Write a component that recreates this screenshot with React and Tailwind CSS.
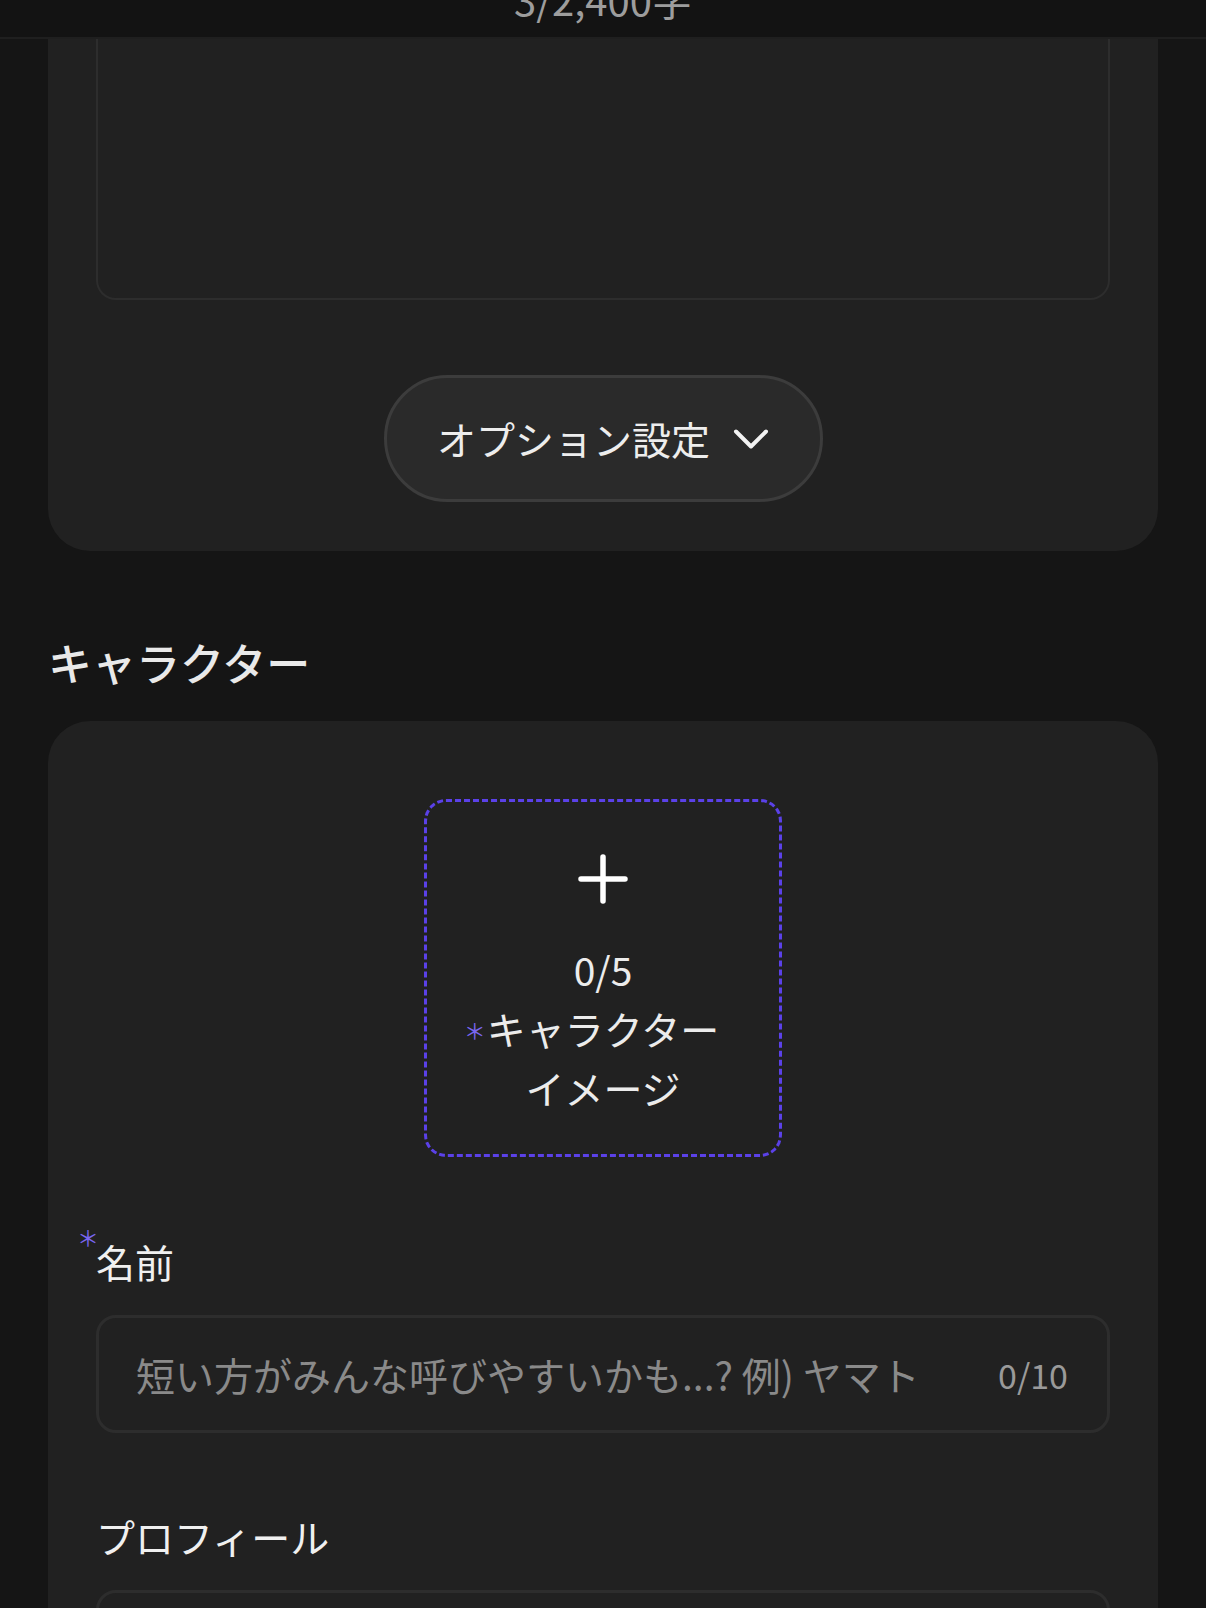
import React from 'react';

const FONT = "font-['Noto_Sans_CJK_JP','Noto_Sans',sans-serif]";

function PlusIcon() {
  return (
    <svg width="50" height="50" viewBox="0 0 50 50" fill="none">
      <path d="M25 3v44M3 25h44" stroke="#ffffff" strokeWidth="5.5" strokeLinecap="round" />
    </svg>
  );
}

function ChevronIcon() {
  return (
    <svg width="36" height="36" viewBox="0 0 36 36" fill="none">
      <path d="M3 10.5l15 15 15-15" stroke="#f2f2f2" strokeWidth="4" strokeLinecap="round" strokeLinejoin="round" />
    </svg>
  );
}

function Field({ label, required, placeholder, count }) {
  return (
    <div>
      <div className="relative inline-block text-[39px] leading-[58px] text-[#f0f0f0]">
        {required && (
          <span className="absolute -left-[19px] -top-[7px] text-[22px] leading-none text-[#7a66f0]">＊</span>
        )}
        {label}
      </div>
      <div className="mt-[25px] h-[118px] rounded-[20px] border-[3px] border-[#2d2d2d] bg-[#212121] flex items-center justify-between pl-[37px] pr-[39px]">
        <span className="text-[39px] text-[#8a8a8a] whitespace-nowrap">{placeholder}</span>
        {count && <span className="text-[34px] text-[#9a9a9a]">{count}</span>}
      </div>
    </div>
  );
}

export default function App() {
  return (
    <div className={`${FONT} w-full h-[1608px] overflow-hidden bg-[#151515]`}>
      {/* sticky counter bar */}
      <div className="h-[39px] overflow-hidden bg-[#131313] border-b-2 border-[#1f1f1f]">
        <div className="-mt-[21px] text-center text-[40px] leading-[40px] text-[#9d9d9d]">3/2,400字</div>
      </div>

      {/* story card (scrolled) */}
      <div className="mx-[48px] rounded-b-[42px] bg-[#212121] px-[48px] pb-[49px]">
        <div className="h-[261px] rounded-b-[20px] border-2 border-t-0 border-[#2d2d2d] bg-[#212121]" />
        <div className="mt-[75px] flex justify-center">
          <button className="w-[439px] h-[127px] rounded-full border-[3px] border-[#3c3c3c] bg-[#2a2a2a] flex items-center justify-center gap-[23px]">
            <span className="text-[39px] text-[#ededed]">オプション設定</span>
            <ChevronIcon />
          </button>
        </div>
      </div>

      <h2 className="mt-[77px] mb-[25px] px-[48px] text-[44px] leading-[68px] font-medium text-[#e9e9e9]">キャラクター</h2>

      {/* character card */}
      <div className="mx-[48px] rounded-t-[42px] bg-[#212121] px-[48px] pt-[78px] pb-[60px]">
        <div className="mx-auto w-[358px] h-[358px] rounded-[22px] border-[3px] border-dashed border-[#5b41e8] flex flex-col items-center pt-[52px]">
          <PlusIcon />
          <div className="mt-[36px] text-center text-[39px] leading-[59px] text-[#ececec]">
            <div>0/5</div>
            <div>
              <span className="relative">
                <span className="absolute -left-[23px] top-[18px] text-[22px] leading-none text-[#7a66f0]">＊</span>
                キャラクター
              </span>
            </div>
            <div>イメージ</div>
          </div>
        </div>

        <div className="mt-[75px]">
          <Field label="名前" required placeholder="短い方がみんな呼びやすいかも...? 例) ヤマト" count="0/10" />
        </div>

        <div className="mt-[74px]">
          <div className="text-[39px] leading-[58px] text-[#f0f0f0]">プロフィール</div>
          <div className="mt-[25px] h-[320px] rounded-[20px] border-[3px] border-[#2d2d2d] bg-[#212121]" />
        </div>
      </div>
    </div>
  );
}
